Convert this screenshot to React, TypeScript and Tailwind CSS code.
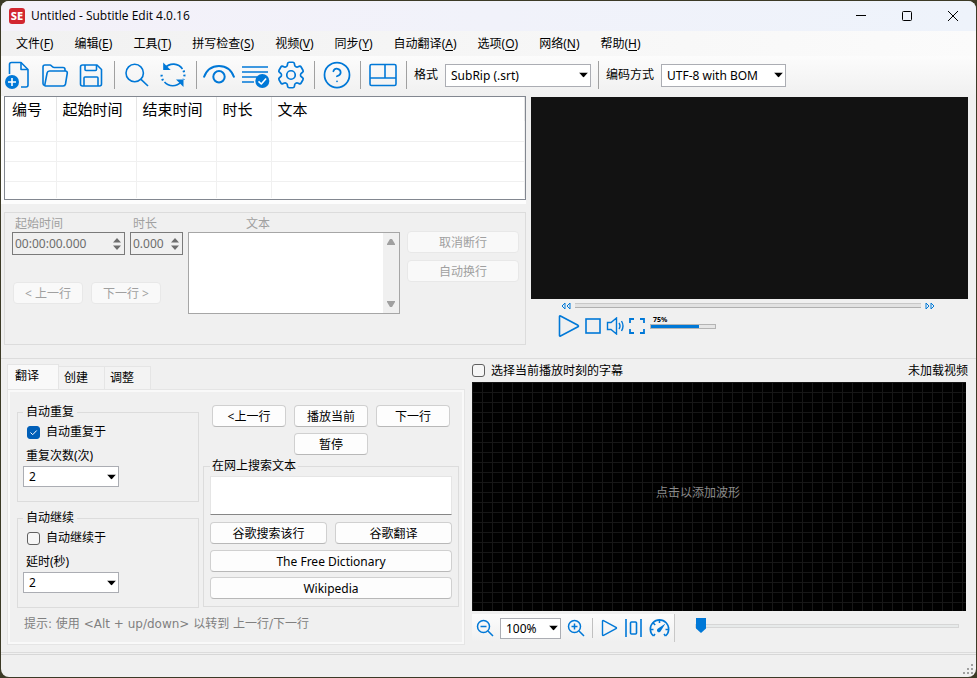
import { useState } from "react";
import type { ReactNode } from "react";
import clsx from "clsx";
import { CircleHelp } from "lucide-react";
import { HiOutlineCog6Tooth } from "react-icons/hi2";

const menus = [
  { label: "文件", hotkey: "F" },
  { label: "编辑", hotkey: "E" },
  { label: "工具", hotkey: "T" },
  { label: "拼写检查", hotkey: "S" },
  { label: "视频", hotkey: "V" },
  { label: "同步", hotkey: "Y" },
  { label: "自动翻译", hotkey: "A" },
  { label: "选项", hotkey: "O" },
  { label: "网络", hotkey: "N" },
  { label: "帮助", hotkey: "H" },
];

const columns = [
  { label: "编号", width: "w-[51px]" },
  { label: "起始时间", width: "w-20" },
  { label: "结束时间", width: "w-20" },
  { label: "时长", width: "w-[55px]" },
  { label: "文本", width: "" },
];

const tabs = ["翻译", "创建", "调整"];

function ToolIcon({ children }: { children: ReactNode }) {
  return (
    <svg
      width="36"
      height="32"
      viewBox="0 0 36 32"
      fill="none"
      stroke="currentColor"
      strokeWidth="1.6"
      strokeLinejoin="round"
    >
      {children}
    </svg>
  );
}

function ToolButton({
  label,
  children,
}: {
  label: string;
  children: ReactNode;
}) {
  return (
    <button
      type="button"
      aria-label={label}
      className="flex h-8 w-9 shrink-0 items-center justify-center text-[#0078d7]"
    >
      {children}
    </button>
  );
}

function Separator() {
  return <div className="mr-1 ml-[5px] h-7 w-px shrink-0 bg-[#a0a0a0]" />;
}

interface DropDownProps {
  id: string;
  label?: string;
  options: string[];
  className: string;
}

function DropDown({ id, label, options, className }: DropDownProps) {
  return (
    <div className={clsx("relative shrink-0", className)}>
      <select
        id={id}
        aria-label={label}
        className="block h-full w-full appearance-none border border-[#abadb3] bg-white pt-px pl-[5px] text-black outline-none"
      >
        {options.map((option) => (
          <option key={option}>{option}</option>
        ))}
      </select>
      <svg
        className="pointer-events-none absolute top-1/2 right-[3px] -translate-y-1/2"
        width="9"
        height="5"
        viewBox="0 0 9 5"
      >
        <path d="M0 0h9L4.500 5z" fill="#000" />
      </svg>
    </div>
  );
}

function PushButton({
  children,
  className,
  disabled,
}: {
  children: ReactNode;
  className?: string;
  disabled?: boolean;
}) {
  return (
    <button
      type="button"
      disabled={disabled}
      className={clsx(
        "h-[22px] rounded border pt-px text-center leading-5",
        disabled
          ? "border-[#e8e8e8] bg-[#f9f9f9] text-[#a0a0a0]"
          : "border-[#d0d0d0] border-b-[#b8b8b8] bg-[#fdfdfd] text-black",
        className,
      )}
    >
      {children}
    </button>
  );
}

function CheckBox({
  id,
  label,
  defaultChecked,
}: {
  id: string;
  label: string;
  defaultChecked?: boolean;
}) {
  return (
    <div className="flex h-4 items-center gap-[6px]">
      <span className="relative flex h-[13px] w-[13px]">
        <input
          id={id}
          type="checkbox"
          defaultChecked={defaultChecked}
          className="peer h-[13px] w-[13px] appearance-none rounded-[3px] border border-[#606060] bg-[#f6f6f6] checked:border-[#005fb8] checked:bg-[#005fb8]"
        />
        <svg
          className="pointer-events-none absolute inset-0 hidden peer-checked:block"
          width="13"
          height="13"
          viewBox="0 0 13 13"
          fill="none"
          stroke="#fff"
        >
          <path d="M3.500 6.500l2.200 2.200L9.700 4.500" />
        </svg>
      </span>
      <label htmlFor={id}>{label}</label>
    </div>
  );
}

function TitleBar() {
  return (
    <header className="flex h-[30px] items-center bg-linear-to-r from-[#f4f1f9] to-[#eef3fb] pl-2">
      <span className="flex h-4 w-4 items-center justify-center rounded-[3px] bg-[#d22630] text-[11px] leading-4 font-extrabold text-white">
        SE
      </span>
      <h1 className="ml-[6px] flex-1 font-['Open_Sans',sans-serif]">
        Untitled - Subtitle Edit 4.0.16
      </h1>
      <div className="flex h-full">
        <button
          type="button"
          aria-label="最小化"
          className="flex w-[46px] items-center justify-center"
        >
          <svg width="10" height="10" viewBox="0 0 10 10" stroke="#000">
            <path d="M0 4.500h10" />
          </svg>
        </button>
        <button
          type="button"
          aria-label="最大化"
          className="flex w-[46px] items-center justify-center"
        >
          <svg
            width="10"
            height="10"
            viewBox="0 0 10 10"
            fill="none"
            stroke="#000"
          >
            <rect x="0.500" y="0.500" width="9" height="9" rx="1" />
          </svg>
        </button>
        <button
          type="button"
          aria-label="关闭"
          className="flex w-[46px] items-center justify-center"
        >
          <svg width="10" height="10" viewBox="0 0 10 10" stroke="#000">
            <path d="M0 0l10 10M10 0L0 10" />
          </svg>
        </button>
      </div>
    </header>
  );
}

function MenuBar() {
  return (
    <nav className="flex h-[25px] items-center gap-[21px] bg-linear-to-r from-[#f1f1f1] to-[#fbfbfb] pl-[15px]">
      {menus.map((menu) => (
        <button key={menu.hotkey} type="button" className="whitespace-nowrap">
          {menu.label}(<u className="underline-offset-2">{menu.hotkey}</u>)
        </button>
      ))}
    </nav>
  );
}

function ToolBar() {
  return (
    <div className="flex h-10 items-center bg-linear-to-b from-[#fcfcfc] to-[#f0f0f0] pb-[2px]">
      <ToolButton label="新建">
        <ToolIcon>
          <path d="M8.500 15V5.500a2 2 0 0 1 2-2H20l7 7V26a2 2 0 0 1-2 2H20" />
          <path d="M20 3.500v7h7" />
          <circle cx="11" cy="23" r="7" fill="currentColor" stroke="none" />
          <path d="M11 19v8M7 23h8" stroke="#fff" />
        </ToolIcon>
      </ToolButton>
      <ToolButton label="打开">
        <ToolIcon>
          <path d="M7.500 26.500C6.500 26.300 6 25.600 6 24.500V8a2 2 0 0 1 2-2h5c1.500 0 1.800 2.500 4 2.500h9a2 2 0 0 1 2 2V12" />
          <path d="M8.500 27H26a2.500 2.500 0 0 0 2.500-2L30.300 14a1.800 1.800 0 0 0-1.800-2H12.500a2.500 2.500 0 0 0-2.400 2L8 24.800C7.800 26.200 7.500 27 8.500 27z" />
        </ToolIcon>
      </ToolButton>
      <ToolButton label="保存">
        <ToolIcon>
          <path d="M9.500 6H24l4.500 4.500V25a2 2 0 0 1-2 2h-17a2 2 0 0 1-2-2V8a2 2 0 0 1 2-2z" />
          <path d="M12 6v4.500a1 1 0 0 0 1 1h9.500a1 1 0 0 0 1-1V6M11 27v-8a1 1 0 0 1 1-1h12a1 1 0 0 1 1 1v8" />
        </ToolIcon>
      </ToolButton>
      <Separator />
      <ToolButton label="查找">
        <ToolIcon>
          <circle cx="15.700" cy="14" r="8.700" />
          <path d="M22 20.300l7 6.700" />
        </ToolIcon>
      </ToolButton>
      <ToolButton label="替换">
        <ToolIcon>
          <path d="M10 9A11 11 0 0 1 27.500 10" />
          <path d="M26 23A11 11 0 0 1 9.500 23" />
          <path
            d="M28.500 11.500A11.500 11.500 0 0 1 28.500 20.500M8 21.500A11.500 11.500 0 0 1 6.800 14"
            strokeDasharray="1.800 2.400"
            strokeWidth="2.200"
          />
          <path d="M8.200 3.500v7.500h7.500z" fill="currentColor" stroke="none" />
          <path d="M28.500 28v-7.500H21z" fill="currentColor" stroke="none" />
        </ToolIcon>
      </ToolButton>
      <Separator />
      <ToolButton label="视觉同步">
        <ToolIcon>
          <path
            d="M2.800 18.500C5.500 11 11 7 18 7s12.500 4 15.200 11.500"
            strokeWidth="2"
          />
          <circle cx="18" cy="17.700" r="5.700" strokeWidth="2" />
        </ToolIcon>
      </ToolButton>
      <ToolButton label="拼写检查">
        <ToolIcon>
          <path d="M5 8h26M5 13h26M5 18h15M5 23h12" />
          <circle cx="25.300" cy="22" r="7" fill="currentColor" stroke="none" />
          <path d="M21.500 22.300l2.800 2.700 4.800-5.500" stroke="#fff" />
        </ToolIcon>
      </ToolButton>
      <ToolButton label="设置">
        <HiOutlineCog6Tooth size={34} strokeWidth={1.2} />
      </ToolButton>
      <Separator />
      <ToolButton label="帮助">
        <CircleHelp size={30} strokeWidth={1.4} />
      </ToolButton>
      <Separator />
      <ToolButton label="布局">
        <ToolIcon>
          <rect x="5" y="5.500" width="26" height="21" rx="1.500" />
          <path d="M5 19h26M20 5.500V19" />
        </ToolIcon>
      </ToolButton>
      <Separator />
      <label htmlFor="format" className="mr-[7px] ml-[3px] whitespace-nowrap">
        格式
      </label>
      <DropDown
        id="format"
        options={["SubRip (.srt)"]}
        className="h-[23px] w-[146px]"
      />
      <div className="w-[2px]" />
      <Separator />
      <label htmlFor="encoding" className="mr-[7px] ml-[3px] whitespace-nowrap">
        编码方式
      </label>
      <DropDown
        id="encoding"
        options={["UTF-8 with BOM"]}
        className="h-[23px] w-[125px]"
      />
    </div>
  );
}

function SubtitleList() {
  return (
    <div className="h-[104px] border border-[#828790] bg-white">
      <table className="w-full table-fixed border-collapse text-[15px] leading-6">
        <thead>
          <tr className="h-6">
            {columns.map((column) => (
              <th
                key={column.label}
                className={clsx(
                  "border-r border-[#e5e5e5] p-0 pl-[6px] text-left font-normal first:pl-[7px]",
                  column.width,
                )}
              >
                {column.label}
              </th>
            ))}
          </tr>
        </thead>
        <tbody>
          {[1, 2, 3].map((row) => (
            <tr key={row} className="h-5 border-b border-[#f0f0f0]">
              {columns.map((column) => (
                <td key={column.label} className="border-r border-[#f0f0f0]" />
              ))}
            </tr>
          ))}
          <tr className="h-[17px]">
            {columns.map((column) => (
              <td key={column.label} className="border-r border-[#f0f0f0]" />
            ))}
          </tr>
        </tbody>
      </table>
    </div>
  );
}

function TimeBox({
  id,
  label,
  value,
  className,
}: {
  id: string;
  label: string;
  value: string;
  className: string;
}) {
  return (
    <div className={className}>
      <label htmlFor={id} className="block pl-[3px] text-[#a0a0a0]">
        {label}
      </label>
      <div className="flex h-[23px] items-center border border-[#7a7a7a] pr-[3px] pl-[2px]">
        <input
          id={id}
          disabled
          defaultValue={value}
          className="h-full w-full min-w-0 bg-transparent text-[#6d6d6d]"
        />
        <svg width="8" height="14" viewBox="0 0 8 14" className="shrink-0">
          <path d="M0 5.500h8L4 1zM0 8.500h8L4 13z" fill="#6d6d6d" />
        </svg>
      </div>
    </div>
  );
}

function EditPanel() {
  return (
    <div className="flex h-[133px] gap-[5px] border border-[#dcdcdc] pt-[3px] pr-[6px] pl-[7px]">
      <div>
        <div className="flex gap-[5px]">
          <TimeBox
            id="start-time"
            label="起始时间"
            value="00:00:00.000"
            className="w-[113px]"
          />
          <TimeBox
            id="duration"
            label="时长"
            value="0.000"
            className="w-[53px]"
          />
        </div>
        <div className="mt-[27px] flex gap-2 pl-px">
          <PushButton disabled className="w-[70px]">
            &lt; 上一行
          </PushButton>
          <PushButton disabled className="w-[70px]">
            下一行 &gt;
          </PushButton>
        </div>
      </div>
      <div className="min-w-0 flex-1">
        <label htmlFor="line-text" className="block pl-[58px] text-[#a0a0a0]">
          文本
        </label>
        <div className="flex h-[82px] border border-[#a6a6a6] bg-white">
          <textarea
            id="line-text"
            disabled
            className="min-w-0 flex-1 resize-none"
          />
          <div className="flex w-4 flex-col items-center justify-between bg-[#f0f0f0] py-[6px]">
            <svg width="8" height="6" viewBox="0 0 8 6">
              <path d="M0 6V5l3-5h2l3 5v1z" fill="#a0a0a0" />
            </svg>
            <svg width="8" height="6" viewBox="0 0 8 6">
              <path d="M0 0v1l3 5h2l3-5V0z" fill="#a0a0a0" />
            </svg>
          </div>
        </div>
      </div>
      <div className="flex w-[114px] flex-col gap-[7px] pt-[15px] pl-[2px]">
        <PushButton disabled>取消断行</PushButton>
        <PushButton disabled>自动换行</PushButton>
      </div>
    </div>
  );
}

function VideoPlayer() {
  return (
    <div className="min-w-0 flex-1 pt-px pr-2">
      <div className="h-[202px] bg-[#121212]" />
      <div className="flex h-[13px] items-center pr-[33px] pl-[30px] text-[#0078d7]">
        <button type="button" aria-label="快退">
          <svg
            width="10"
            height="8"
            viewBox="0 0 10 8"
            fill="none"
            stroke="currentColor"
            className="block"
          >
            <path d="M4 1L1 4l3 3zM9 1L6 4l3 3z" />
          </svg>
        </button>
        <input
          type="range"
          aria-label="播放位置"
          defaultValue={0}
          className="mx-1 h-[5px] min-w-0 flex-1 appearance-none border-y border-t-[#c8c8c8] border-b-[#b0b0b0] bg-[#e2e2e2] [&::-webkit-slider-thumb]:h-0 [&::-webkit-slider-thumb]:w-0 [&::-webkit-slider-thumb]:appearance-none"
        />
        <button type="button" aria-label="快进">
          <svg
            width="10"
            height="8"
            viewBox="0 0 10 8"
            fill="none"
            stroke="currentColor"
            className="block"
          >
            <path d="M1 1l3 3-3 3zM6 1l3 3-3 3z" />
          </svg>
        </button>
      </div>
      <div className="flex h-7 items-center gap-[5px] pl-[27px] text-[#0078d7]">
        <button type="button" aria-label="播放">
          <svg
            width="22"
            height="24"
            viewBox="0 0 22 24"
            fill="none"
            stroke="currentColor"
            strokeWidth="1.600"
            strokeLinejoin="round"
            className="block"
          >
            <path d="M1.500 2.500v19q0 1 1 .5l17.500-9.200q1-.8 0-1.500L2.500 2q-1-.5-1 .5z" />
          </svg>
        </button>
        <button type="button" aria-label="停止">
          <svg
            width="16"
            height="16"
            viewBox="0 0 16 16"
            fill="none"
            stroke="currentColor"
            strokeWidth="1.600"
            className="block"
          >
            <rect x="1" y="1" width="14" height="14" />
          </svg>
        </button>
        <button type="button" aria-label="静音">
          <svg
            width="18"
            height="18"
            viewBox="0 0 18 18"
            fill="none"
            stroke="currentColor"
            strokeWidth="1.400"
            className="block"
          >
            <path d="M1.500 5.500H5L10.500 1v16L5 12.500H1.500zM13 6q2 3 0 6M15.500 4q3 5 0 10" />
          </svg>
        </button>
        <button type="button" aria-label="全屏">
          <svg
            width="16"
            height="16"
            viewBox="0 0 16 16"
            fill="none"
            stroke="currentColor"
            strokeWidth="1.800"
            className="block"
          >
            <path d="M1 5V1h4M11 1h4v4M15 11v4h-4M5 15H1v-4" />
          </svg>
        </button>
        <div className="flex flex-col pb-2">
          <label
            htmlFor="volume"
            className="pl-[3px] text-[7px] leading-2 font-bold text-black"
          >
            75%
          </label>
          <input
            id="volume"
            type="range"
            defaultValue={75}
            className="h-[5px] w-[66px] appearance-none border border-[#b4b4b4] bg-linear-to-r from-[#0078d7] from-75% to-[#e6e6e6] to-75% [&::-webkit-slider-thumb]:h-0 [&::-webkit-slider-thumb]:w-0 [&::-webkit-slider-thumb]:appearance-none"
          />
        </div>
      </div>
    </div>
  );
}

function RepeatGroup({
  id,
  title,
  checkLabel,
  countLabel,
  checked,
}: {
  id: string;
  title: string;
  checkLabel: string;
  countLabel: string;
  checked?: boolean;
}) {
  return (
    <fieldset className="min-w-0 border border-[#dcdcdc] pr-2 pb-[14px] pl-[5px]">
      <legend className="px-[3px] leading-4">{title}</legend>
      <div className="pt-1 pl-1">
        <CheckBox
          id={`${id}-enabled`}
          label={checkLabel}
          defaultChecked={checked}
        />
      </div>
      <label htmlFor={`${id}-count`} className="mt-2 block pl-[3px]">
        {countLabel}
      </label>
      <DropDown
        id={`${id}-count`}
        options={["2"]}
        className="mt-[2px] h-[21px] w-24"
      />
    </fieldset>
  );
}

function TranslateTab() {
  return (
    <div className="pt-3 pr-[3px] pb-[10px] pl-[7px]">
      <div className="flex gap-1">
        <div className="flex w-[182px] shrink-0 flex-col gap-2">
          <RepeatGroup
            id="repeat"
            title="自动重复"
            checkLabel="自动重复于"
            countLabel="重复次数(次)"
            checked
          />
          <RepeatGroup
            id="continue"
            title="自动继续"
            checkLabel="自动继续于"
            countLabel="延时(秒)"
          />
        </div>
        <div className="min-w-0 flex-1 pt-px">
          <div className="grid grid-cols-3 gap-x-2 gap-y-[6px] px-[9px]">
            <PushButton>&lt;上一行</PushButton>
            <PushButton>播放当前</PushButton>
            <PushButton>下一行</PushButton>
            <PushButton className="col-start-2">暂停</PushButton>
          </div>
          <fieldset className="mt-[3px] min-w-0 border border-[#dcdcdc] px-[6px] pb-[7px]">
            <legend className="px-[2px] leading-4">在网上搜索文本</legend>
            <textarea
              aria-label="在网上搜索文本"
              className="mt-[2px] block h-[39px] w-full resize-none border border-[#e5e5e5] border-b-[#868686] bg-white outline-none"
            />
            <div className="mt-[7px] flex gap-2">
              <PushButton className="flex-1">谷歌搜索该行</PushButton>
              <PushButton className="flex-1">谷歌翻译</PushButton>
            </div>
            <PushButton className="mt-[6px] block w-full">
              The Free Dictionary
            </PushButton>
            <PushButton className="mt-[5px] block w-full">
              Wikipedia
            </PushButton>
          </fieldset>
        </div>
      </div>
      <p className="mt-2 pl-[7px] font-['DejaVu_Sans','Noto_Sans_CJK_SC',sans-serif] text-[#808080]">
        提示: 使用 &lt;Alt + up/down&gt; 以转到 上一行/下一行
      </p>
    </div>
  );
}

function TabPanel() {
  const [active, setActive] = useState("翻译");

  return (
    <div className="w-[458px] shrink-0 pt-[5px]">
      <div role="tablist" className="flex h-[25px] items-end">
        {tabs.map((tab) => (
          <button
            key={tab}
            type="button"
            role="tab"
            aria-selected={tab === active}
            onClick={() => setActive(tab)}
            className={clsx(
              "border border-b-0 border-[#e5e5e5] text-left",
              tab === active
                ? "h-[25px] w-[52px] bg-[#f9f9f9] pb-[2px] pl-[7px]"
                : "h-[23px] w-[46px] border-l-0 bg-[#f3f3f3] pl-[5px]",
            )}
          >
            {tab}
          </button>
        ))}
      </div>
      <div className="border border-[#e5e5e5] bg-[#f9f9f9] p-[2px]">
        <div role="tabpanel" className="min-h-[250px] bg-[#f0f0f0]">
          {active === "翻译" && <TranslateTab />}
        </div>
      </div>
    </div>
  );
}

function Waveform() {
  return (
    <div className="min-w-0 flex-1 pt-[3px] pr-[10px]">
      <div className="-mr-[2px] flex h-5 items-center justify-between pb-[3px]">
        <CheckBox id="follow-video" label="选择当前播放时刻的字幕" />
        <span>未加载视频</span>
      </div>
      <div className="flex h-[229px] items-center justify-center bg-black bg-[linear-gradient(to_right,#171717_1px,transparent_1px),linear-gradient(to_bottom,#171717_1px,transparent_1px)] bg-size-[10px_10px] pr-[42px] pb-2 text-[#8a8a8a]">
        点击以添加波形
      </div>
      <div className="mt-[3px] flex items-center">
        <div className="flex h-7 items-center border-r border-[#c8c8c8] bg-linear-to-b from-[#fcfcfc] to-[#f0f0f0] px-1 text-[#0078d7]">
          <button type="button" aria-label="缩小">
            <svg
              width="18"
              height="18"
              viewBox="0 0 18 18"
              fill="none"
              stroke="currentColor"
              strokeWidth="1.500"
              className="block"
            >
              <circle cx="7.500" cy="7.500" r="6" />
              <path d="M12 12l5 5M4.500 7.500h6" />
            </svg>
          </button>
          <DropDown
            id="zoom"
            label="缩放"
            options={["100%"]}
            className="mx-[6px] h-[21px] w-[61px]"
          />
          <button type="button" aria-label="放大">
            <svg
              width="18"
              height="18"
              viewBox="0 0 18 18"
              fill="none"
              stroke="currentColor"
              strokeWidth="1.500"
              className="block"
            >
              <circle cx="7.500" cy="7.500" r="6" />
              <path d="M12 12l5 5M4.500 7.500h6M7.500 4.500v6" />
            </svg>
          </button>
          <div className="mr-2 ml-[7px] h-5 w-px bg-[#c0c0c0]" />
          <button type="button" aria-label="播放波形">
            <svg
              width="17"
              height="18"
              viewBox="0 0 17 18"
              fill="none"
              stroke="currentColor"
              strokeWidth="1.400"
              strokeLinejoin="round"
              className="block"
            >
              <path d="M1.500 2.200v13.600q0 1 1 .6L15 9.700q1-.7 0-1.400L2.500 1.600q-1-.4-1 .6z" />
            </svg>
          </button>
          <button type="button" aria-label="居中" className="ml-[7px]">
            <svg
              width="17"
              height="18"
              viewBox="0 0 17 18"
              fill="none"
              stroke="currentColor"
              strokeWidth="1.600"
              className="block"
            >
              <path d="M1 0v18M16 0v18" />
              <rect x="5.500" y="3" width="6" height="12" rx="1" />
            </svg>
          </button>
          <button type="button" aria-label="播放速度" className="ml-[7px]">
            <svg
              width="21"
              height="20"
              viewBox="0 0 21 20"
              fill="none"
              stroke="currentColor"
              strokeWidth="1.600"
              className="block"
            >
              <path d="M4.500 18A9.200 9.200 0 1 1 16.500 18" />
              <path d="M10.500 2v3M4.200 5l2 2M1.500 11.500h3M16.500 11.500h3M4.500 18l1.500-2M16.500 18L15 16" />
              <path
                d="M16.500 5.500L9 10.500a2 2 0 1 0 2.800 2.500z"
                fill="currentColor"
                stroke="none"
              />
            </svg>
          </button>
        </div>
        <input
          type="range"
          aria-label="波形位置"
          defaultValue={0}
          className="mr-[7px] mb-1 ml-5 h-[15px] min-w-0 flex-1 appearance-none bg-transparent [&::-webkit-slider-runnable-track]:h-[4px] [&::-webkit-slider-runnable-track]:border [&::-webkit-slider-runnable-track]:border-[#d6d6d6] [&::-webkit-slider-runnable-track]:bg-[#e7eaea] [&::-webkit-slider-thumb]:-mt-[7px] [&::-webkit-slider-thumb]:h-[15px] [&::-webkit-slider-thumb]:w-[10px] [&::-webkit-slider-thumb]:appearance-none [&::-webkit-slider-thumb]:bg-[#0078d7] [&::-webkit-slider-thumb]:[clip-path:polygon(0_0,100%_0,100%_70%,50%_100%,0_70%)]"
        />
      </div>
    </div>
  );
}

function StatusBar() {
  return (
    <footer className="flex flex-1 items-end justify-end border-t border-[#d7d7d7] pr-[2px] pb-[2px]">
      <svg width="11" height="11" viewBox="0 0 11 11" fill="#a0a0a0">
        <path d="M8 0h2v2H8zM4 4h2v2H4zM8 4h2v2H8zM0 8h2v2H0zM4 8h2v2H4zM8 8h2v2H8z" />
      </svg>
    </footer>
  );
}

export default function App() {
  return (
    <div className="flex min-h-screen bg-[#3c3a26] p-px font-['Noto_Sans','Noto_Sans_CJK_SC',sans-serif] text-[12px] leading-4 text-black">
      <div className="flex flex-1 flex-col overflow-hidden rounded-lg bg-[#f0f0f0]">
        <TitleBar />
        <MenuBar />
        <ToolBar />
        <div className="flex gap-[5px] border-b border-[#dcdcdc] pb-[13px]">
          <div className="w-[525px] shrink-0">
            <div className="bg-[#fdfdfd] pb-1 pl-[3px]">
              <SubtitleList />
            </div>
            <div className="mt-2 pl-[3px]">
              <EditPanel />
            </div>
          </div>
          <VideoPlayer />
        </div>
        <div className="flex gap-[7px] border-b border-[#dcdcdc] pb-[7px] pl-[6px]">
          <TabPanel />
          <Waveform />
        </div>
        <div className="h-px" />
        <StatusBar />
      </div>
    </div>
  );
}
